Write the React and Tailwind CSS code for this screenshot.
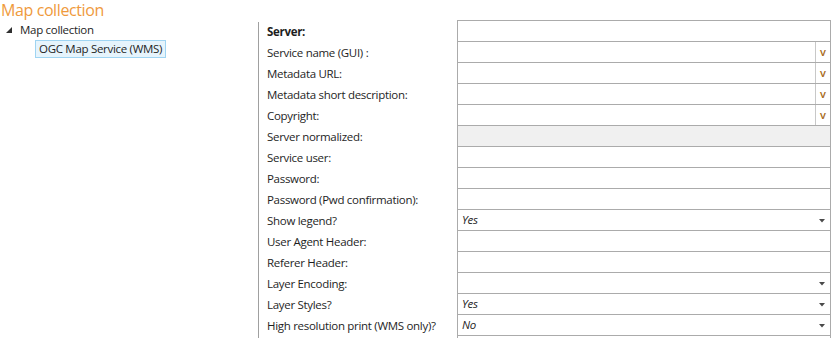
import React from "react";

const rows = [
  { label: "Server:", bold: true, type: "text" },
  { label: "Service name (GUI) :", type: "v" },
  { label: "Metadata URL:", type: "v" },
  { label: "Metadata short description:", type: "v" },
  { label: "Copyright:", type: "v" },
  { label: "Server normalized:", type: "disabled" },
  { label: "Service user:", type: "text" },
  { label: "Password:", type: "text" },
  { label: "Password (Pwd confirmation):", type: "text" },
  { label: "Show legend?", type: "select", value: "Yes" },
  { label: "User Agent Header:", type: "text" },
  { label: "Referer Header:", type: "text" },
  { label: "Layer Encoding:", type: "select", value: "" },
  { label: "Layer Styles?", type: "select", value: "Yes" },
  { label: "High resolution print (WMS only)?", type: "select", value: "No" },
];

function Arrow() {
  return (
    <svg width="6" height="4" viewBox="0 0 6 4" className="mr-[5px] mt-[1px]">
      <polygon points="0,0 6,0 3,3.5" fill="#4a4a4a" />
    </svg>
  );
}

function Field({ row }) {
  const base = "h-[21px] border-b border-[#ababab] flex items-center";
  if (row.type === "disabled") return <div className={`${base} bg-[#f0f0f0]`} />;
  if (row.type === "v")
    return (
      <div className={`${base} justify-end`}>
        <div className="w-[15px] h-full border-l border-[#c8c8c8] flex items-center justify-center text-[11px] font-semibold text-[#a86a18] leading-none pb-[1px]">
          v
        </div>
      </div>
    );
  if (row.type === "select")
    return (
      <div className={`${base} justify-between`}>
        <span className="pl-[4px] italic text-[11.5px] tracking-[-0.3px] text-[#1e1e1e]">{row.value}</span>
        <Arrow />
      </div>
    );
  return <div className={base} />;
}

export default function App() {
  return (
    <div
      className="w-[832px] h-[338px] bg-white overflow-hidden text-[#1e1e1e]"
      style={{ fontFamily: '"Open Sans", "Noto Sans", sans-serif' }}
    >
      <div className="h-[20px] text-[16px] leading-[20px] text-[#ef9a3c] pl-[1px] tracking-[-0.4px]">
        Map collection
      </div>
      <div className="flex">
        <div className="w-[258px] shrink-0">
          <div className="flex items-center h-[19px] text-[11.5px] tracking-[-0.3px]">
            <svg width="6" height="6" viewBox="0 0 6 6" className="ml-[6px] mr-[8px]">
              <polygon points="6,0 6,6 0,6" fill="#303030" />
            </svg>
            <span className="text-[#1e1e1e]">Map collection</span>
          </div>
          <div className="ml-[35px] mt-[1px] w-[131px] h-[18px] border border-[#9fd4f2] bg-[#e6f4fc] flex items-center pl-[3px] text-[11.5px] tracking-[-0.3px] whitespace-nowrap">
            OGC Map Service (WMS)
          </div>
        </div>
        <div className="w-px bg-[#a0a0a0] mt-[2px] h-[318px]" />
        <div className="w-[198px] shrink-0 pl-[8px] border-t border-transparent">
          {rows.map((r, i) => (
            <div
              key={i}
              className={`h-[21px] flex items-center text-[11.5px] tracking-[-0.3px] whitespace-nowrap ${r.bold ? "font-bold" : ""}`}
            >
              {r.label}
            </div>
          ))}
        </div>
        <div className="w-[374px] shrink-0 border-t border-l border-r border-[#ababab]">
          {rows.map((r, i) => (
            <Field key={i} row={r} />
          ))}
        </div>
      </div>
    </div>
  );
}
